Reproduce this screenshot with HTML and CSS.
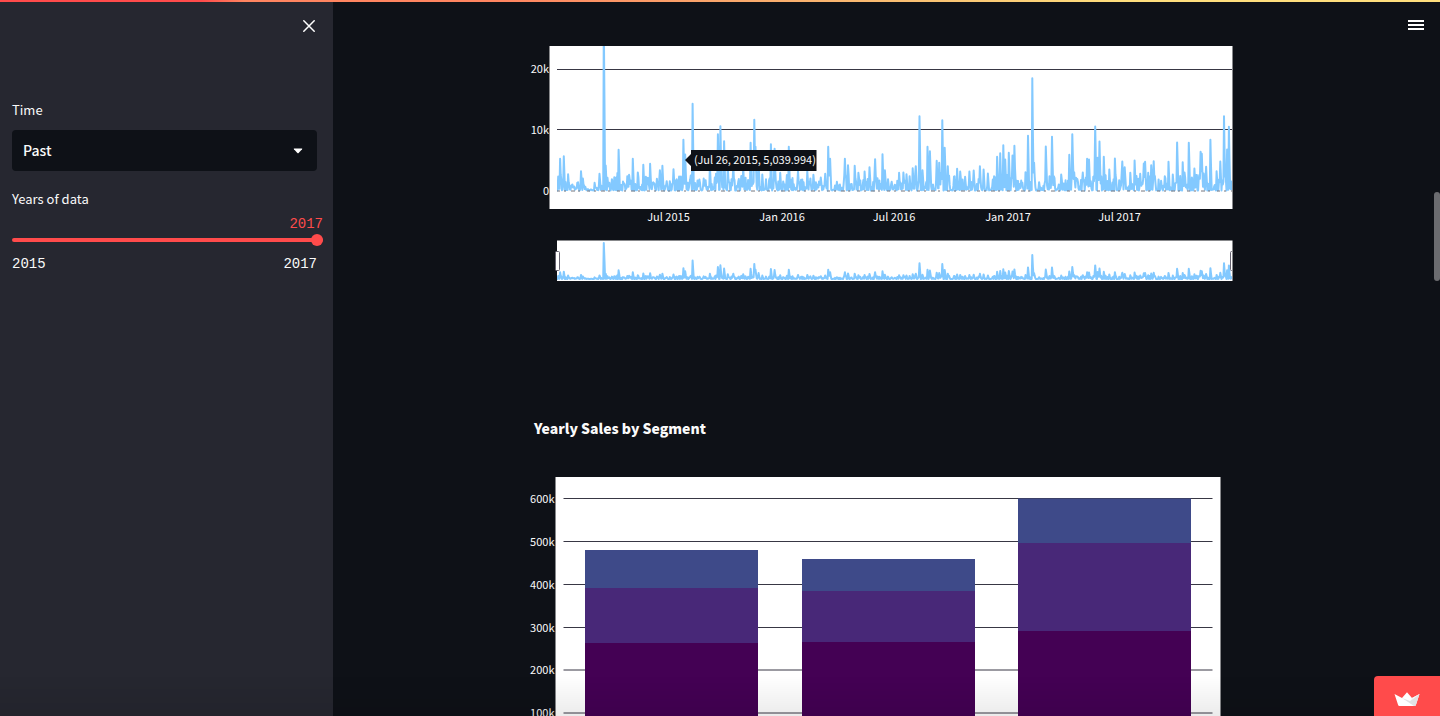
FILE: index.html
```html
<!DOCTYPE html>
<html lang="en">
<head>
<meta charset="utf-8">
<title>Sales dashboard</title>
<link rel="stylesheet" href="styles.css">
</head>
<body>
<div class="top-strip"></div>
<div class="app">
  <aside class="sidebar">
    <header class="sidebar-head">
      <button class="icon-button" type="button" aria-label="Close sidebar">
        <svg width="12" height="12" viewBox="0 0 12 12"><path d="M.8 .8 11.2 11.2M11.2 .8 .8 11.2" fill="none" stroke="#fff" stroke-width="1.5" stroke-linecap="round"/></svg>
      </button>
    </header>
    <form class="filters">
      <label class="field-label" for="time">Time</label>
      <div class="select-box">
        <select id="time"><option>Past</option><option>Forecast</option></select>
        <svg class="caret" width="10" height="6" viewBox="0 0 10 6"><path d="M1.2 .5h7.6q.9 0 .3.7L5.6 4.9q-.6.5-1.2 0L.9 1.2Q.3 .5 1.2 .5z" fill="#fff"/></svg>
      </div>
      <label class="field-label" for="years">Years of data</label>
      <output class="slider-value" for="years">2017</output>
      <input class="slider" id="years" type="range" min="2015" max="2017" value="2017">
      <div class="slider-ends"><span>2015</span><span>2017</span></div>
    </form>
  </aside>
  <main class="main">
    <button class="icon-button menu-button" type="button" aria-label="Menu">
      <svg width="16" height="12" viewBox="0 0 16 12"><path d="M0 2h16M0 6h16M0 10h16" stroke="#fff" stroke-width="2"/></svg>
    </button>
    <div class="column">
      <svg class="chart" viewBox="0 0 721 240" role="img" aria-label="Daily sales">
        <defs>
          <clipPath id="plot-clip"><rect x="31" y="0" width="675" height="163"/></clipPath>
          <clipPath id="range-clip"><rect x="31" y="194" width="675" height="41"/></clipPath>
          <clipPath id="handle-clip"><rect x="20" y="194" width="686" height="41"/></clipPath>
        </defs>
        <rect class="plot" x="23.5" y="0" width="683" height="163"/>
        <path class="grid" d="M31 23.500H706M31 83.500H706"/>
        <path id="sales-line" class="series" clip-path="url(#plot-clip)"/>
        <path class="grid zero-line" d="M31 145H706"/>
        <g class="tick tick-end"><text x="23" y="27">20k</text><text x="23" y="88">10k</text><text x="23" y="149">0</text></g>
        <g class="tick tick-mid"><text x="142.500" y="175">Jul 2015</text><text x="256" y="175">Jan 2016</text><text x="368" y="175">Jul 2016</text><text x="482" y="175">Jan 2017</text><text x="593.500" y="175">Jul 2017</text></g>
        <rect class="plot" x="31" y="194.500" width="675.500" height="40.500"/>
        <path id="range-line" class="series range-series" clip-path="url(#range-clip)"/>
        <g class="handle" clip-path="url(#handle-clip)">
          <rect x="29.500" y="205.500" width="4" height="19" rx="1"/><rect x="704.500" y="205.500" width="4" height="19" rx="1"/>
        </g>
        <g>
          <path class="hint" d="M159 114l6-6v-4h125.500v21H165v-5z"/>
          <text class="tick" x="168" y="118">(Jul 26, 2015, 5,039.994)</text>
        </g>
      </svg>
      <h2 class="chart-title">Yearly Sales by Segment</h2>
      <svg class="chart" viewBox="0 0 721 280" role="img" aria-label="Yearly sales by segment">
        <rect class="plot" x="29.500" y="0" width="665" height="280"/>
        <path class="grid" d="M37.500 21.500H686.500M37.500 64.500H686.500M37.500 107.500H686.500M37.500 150.500H686.500M37.500 193H686.500M37.500 236H686.500"/>
        <g class="segment-c"><rect x="59" y="73" width="173" height="38"/><rect x="276" y="82" width="173" height="32"/><rect x="492" y="21.500" width="173" height="44.500"/></g>
        <g class="segment-b"><rect x="59" y="111" width="173" height="55"/><rect x="276" y="114" width="173" height="51"/><rect x="492" y="66" width="173" height="88"/></g>
        <g class="segment-a"><rect x="59" y="166" width="173" height="114"/><rect x="276" y="165" width="173" height="115"/><rect x="492" y="154" width="173" height="126"/></g>
        <g class="tick tick-end"><text x="28.500" y="26">600k</text><text x="28.500" y="69">500k</text><text x="28.500" y="112">400k</text><text x="28.500" y="155">300k</text><text x="28.500" y="197">200k</text><text x="28.500" y="240">100k</text></g>
      </svg>
    </div>
  </main>
</div>
<div class="bottom-shade"></div>
<div class="scroll-thumb"></div>
<a class="host-badge" href="#" aria-label="Hosting">
  <svg width="26" height="15" viewBox="0 0 26 15"><path d="M.5 2 8 6 13 .3 18 6 25.500 2 21.800 13.200Q21.500 14 20.600 14H5.400Q4.500 14 4.200 13.200z" fill="#fff"/><path d="M8 6 20 14H20.600Q21.500 14 21.800 13.200L25.500 2 16 9z" fill="#e2e2e4"/><path d="M25.500 2 18 6 16 9z" fill="#f5f5f5"/></svg>
</a>
<script src="chart.js"></script>
</body>
</html>
```
FILE: styles.css
```css
* { box-sizing: border-box; }
body {
  margin: 0;
  background: #0e1117;
  color: #fafafa;
  font-family: "Noto Sans CJK JP", "Open Sans", sans-serif;
  font-size: 13px;
  overflow: hidden;
}
.app { display: flex; height: 100vh; }
.top-strip {
  position: fixed;
  inset: 0 0 auto;
  height: 2px;
  z-index: 3;
  background: linear-gradient(90deg, #ff4b4b 0 14%, #ff8560 17% 35%, #f9a66b 50%, #f9c373 65%, #ffdf7d 78%);
}
.sidebar { flex: 0 0 333px; padding: 16px 16px 16px 12px; background: #262730; }
.sidebar-head { display: flex; justify-content: flex-end; height: 84px; align-items: flex-start; }
.icon-button {
  display: grid;
  place-items: center;
  width: 20px;
  height: 20px;
  padding: 0;
  border: 0;
  background: none;
}
.sidebar-head .icon-button { margin-right: -2px; }
.filters { display: flex; flex-direction: column; }
.field-label { line-height: 20px; }
.select-box { position: relative; margin: 10px 0 18px; }
.select-box select {
  appearance: none;
  display: block;
  width: 100%;
  height: 41px;
  padding: 0 11px 2px;
  border: 0;
  border-radius: 4px;
  background: #0e1117;
  color: #fafafa;
  font: 500 14px "Noto Sans CJK JP", "Open Sans", sans-serif;
}
.caret { position: absolute; right: 14px; top: 18px; }
.slider-value, .slider-ends { font-family: "Liberation Mono", monospace; font-size: 14px; line-height: 16px; }
.slider-value { align-self: flex-end; margin: 7px -6px 0 0; color: #ff4b4b; }
.slider {
  appearance: none;
  width: calc(100% + 6px);
  height: 12px;
  margin: 2px 0 0;
  background: none;
}
.slider::-webkit-slider-runnable-track { height: 4px; border-radius: 2px; background: #ff4b4b; }
.slider::-webkit-slider-thumb {
  appearance: none;
  width: 12px;
  height: 12px;
  margin-top: -4px;
  border-radius: 50%;
  background: #ff4b4b;
}
.slider-ends { display: flex; justify-content: space-between; margin-top: 10px; }
.main { position: relative; flex: 1; min-width: 0; padding-top: 46px; overflow: hidden; }
.menu-button { position: absolute; top: 15px; right: 14px; }
.column { width: 100%; max-width: 721px; margin: 0 auto; }
.chart { display: block; width: 100%; overflow: visible; }
.chart-title { margin: 130px 0 36px 8px; font-size: 14px; font-weight: 900; line-height: 25px; }
.plot { fill: #fff; }
.grid { fill: none; stroke: #383744; stroke-width: 1; }
.zero-line { stroke: #77767f; stroke-dasharray: 3 4 2 5 4 3 2 7; }
.series { fill: none; stroke: #83c9ff; stroke-width: 2; stroke-linejoin: round; }
.tick { fill: #fafafa; font-size: 11px; }
.tick-end { text-anchor: end; }
.tick-mid { text-anchor: middle; }
.handle rect { fill: #fff; stroke: #666370; }
.hint { fill: #0e1117; }
.segment-a { fill: #440154; }
.segment-b { fill: #482878; }
.segment-c { fill: #3e4a89; }
.bottom-shade {
  position: fixed;
  inset: auto 0 0;
  height: 40px;
  background: linear-gradient(transparent, rgba(0, 0, 0, 0.08));
  pointer-events: none;
}
.scroll-thumb {
  position: fixed;
  top: 192px;
  right: 0;
  width: 6px;
  height: 89px;
  border-radius: 3px;
  background: #6b6c70;
}
.host-badge {
  position: fixed;
  right: 0;
  bottom: 0;
  display: grid;
  place-items: center;
  width: 66px;
  height: 40px;
  padding-top: 6px;
  border-radius: 4px 0 0;
  background: #ff4b4b;
}
```
FILE: chart.js
```js
// Peak days: [plot position, sales in units of 55 dollars]
const peaks = [
  [1.3,42],[3,95],[6.7,103],[11.3,49],[15.7,18],[20.7,25],[24,58],[25.7,36],[31,4],[34,3],[37.7,23],[42.3,50],
  [46.7,505],[48.7,75],[54.7,34],[61.7,122],[67,21],[70.3,43],[72,47],[75.7,95],[80.7,54],[86.3,77],
  [89.7,38],[93,80],[96,25],[99.7,35],[102.7,61],[105.3,74],[109.7,28],[113,28],[116.7,64],[123.7,42],
  [126.3,152],[128,108],[133.7,45],[135.7,260],[142.3,33],[146.7,36],[153,73],[160.7,169],[163.3,193],
  [167,148],[171,68],[176.3,73],[186.3,68],[193.7,143],[197.3,212],[198.7,131],[201.3,83],[205.3,48],
  [213.7,139],[217.3,125],[223,53],[231.7,131],[241.3,58],[250.3,58],[256.7,47],[264,39],[268.3,50],
  [271.3,131],[273.3,95],[279.7,26],[288,95],[290.7,76],[297.7,74],[301.7,53],[307.7,57],[312.7,70],
  [318.3,94],[325.7,109],[328,61],[331.3,34],[334.7,26],[342.3,53],[346.3,54],[349.3,49],[352.3,43],
  [355.7,67],[359,73],[362.7,223],[365.3,61],[370.7,131],[373,118],[379.7,89],[382,83],[385.3,211],
  [388,128],[390.7,73],[400.3,65],[403,57],[408,41],[412.3,57],[416.7,60],[422.7,73],[426.3,63],
  [430.7,51],[437,43],[440.3,101],[443,112],[446,136],[448,93],[452,113],[455.7,105],[457.7,134],
  [464.3,30],[468.7,55],[470.7,164],[475.3,337],[477,83],[482.3,25],[488.7,132],[492.7,43],[494.7,161],
  [497,43],[504.3,48],[512,107],[515.3,169],[517,55],[525.7,54],[530,95],[531.7,93],[538.3,192],
  [540.7,98],[542.7,147],[547,101],[552.3,63],[558,96],[565,87],[568,70],[573,53],[577.3,90],
  [583,50],[586.7,81],[588.3,86],[594.3,76],[597,88],[607.7,43],[611.3,86],[616,48],[620.3,144],
  [625.7,85],[631.7,143],[637.7,66],[643.3,116],[645,110],[649,71],[653.7,152],[659.7,58],[663.3,87],
  [666.7,223],[670.3,123],[671.7,191]
];
const days = 1095;
const width = 675;
let seed = 11;
const random = () => (seed = (seed * 16807) % 2147483647) / 2147483647;
const values = [];
for (let d = 0; d <= days; d++) {
  const x = d * width / days;
  const near = peaks.filter(p => Math.abs(p[0] - x) < 5).map(p => Math.min(p[1], 80));
  const level = near.length ? near.reduce((a, b) => a + b, 0) / near.length : 8;
  values.push(random() < 0.3 ? random() * 3 : level * Math.pow(random(), 1.7) * 0.7);
}
// A peak also lifts the day after it, so that it reads as a spike with a body.
peaks.forEach(([x, v]) => {
  const d = Math.round(x * days / width);
  values[d] = v;
  values[d + 1] = Math.max(values[d + 1], v * 0.5);
});
const line = (base, scale) => values.map((v, d) =>
  (d ? "L" : "M") + (31 + d * width / days).toFixed(1) + " " + (base - v * scale).toFixed(1)).join("");
document.getElementById("sales-line").setAttribute("d", line(144.5, 1 / 3));
document.getElementById("range-line").setAttribute("d", line(233, 0.071));
```
